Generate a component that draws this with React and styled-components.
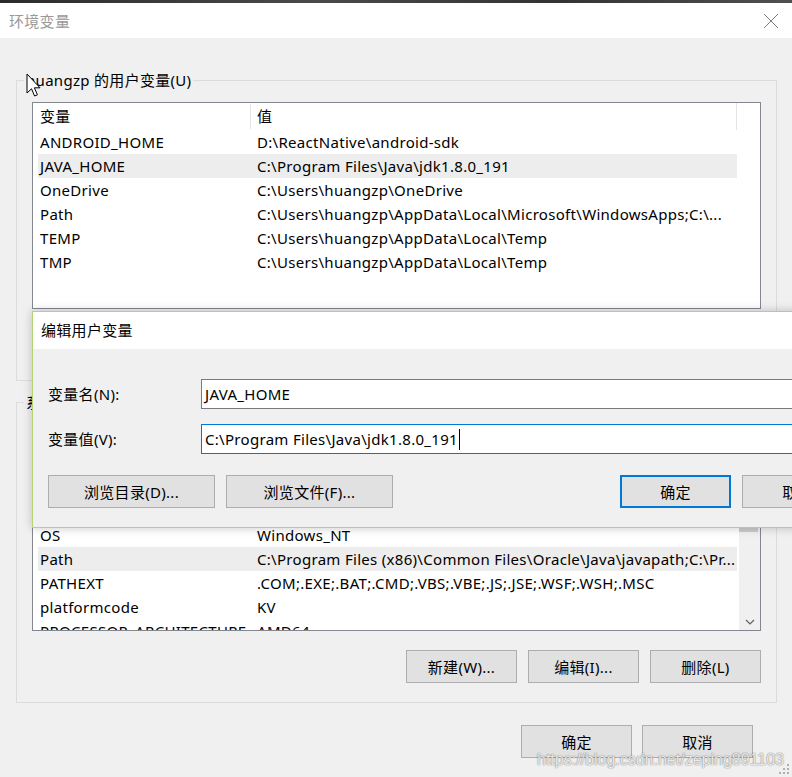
import React from 'react';
import styled, { createGlobalStyle } from 'styled-components';

const userVars = [
    ['ANDROID_HOME', 'D:\\ReactNative\\android-sdk'],
    ['JAVA_HOME', 'C:\\Program Files\\Java\\jdk1.8.0_191', true],
    ['OneDrive', 'C:\\Users\\huangzp\\OneDrive'],
    ['Path', 'C:\\Users\\huangzp\\AppData\\Local\\Microsoft\\WindowsApps;C:\\...'],
    ['TEMP', 'C:\\Users\\huangzp\\AppData\\Local\\Temp'],
    ['TMP', 'C:\\Users\\huangzp\\AppData\\Local\\Temp'],
];

const systemVars = [
    ['ComSpec', 'C:\\WINDOWS\\system32\\cmd.exe'],
    ['DriverData', 'C:\\Windows\\System32\\Drivers\\DriverData'],
    ['NUMBER_OF_PROCESSORS', '4'],
    ['OS', 'Windows_NT'],
    ['Path', 'C:\\Program Files (x86)\\Common Files\\Oracle\\Java\\javapath;C:\\Pr...', true],
    ['PATHEXT', '.COM;.EXE;.BAT;.CMD;.VBS;.VBE;.JS;.JSE;.WSF;.WSH;.MSC'],
    ['platformcode', 'KV'],
    ['PROCESSOR_ARCHITECTURE', 'AMD64'],
];

function VarList({ rows, scroll }) {
    return (
        <ListBox>
            <Columns>
                <HeaderRow>
                    <HeaderCell>变量</HeaderCell>
                    <HeaderCell $second>值</HeaderCell>
                </HeaderRow>
                {rows.map(([name, value, selected], i) =>
                    <Row key={i} $selected={selected}>
                        <Cell>{name}</Cell>
                        <Cell $second>{value}</Cell>
                    </Row>
                )}
            </Columns>
            {scroll && (
                <Scrollbar>
                    <ScrollArrow />
                    <Thumb />
                    <ScrollArrow $bottom>
                        <svg width="10" height="6" viewBox="0 0 10 6">
                            <path d="M1 1 L5 5 L9 1" fill="none" stroke="#606060" strokeWidth="1.2" />
                        </svg>
                    </ScrollArrow>
                </Scrollbar>
            )}
        </ListBox>
    );
}

function App() {
    return (
        <Window>
            <GlobalStyle />
            <TopStrip />
            <TitleBar>
                <Title>环境变量</Title>
                <svg width="16" height="16" viewBox="0 0 16 16">
                    <path d="M1 1 L15 15 M15 1 L1 15" stroke="#7c7c7c" strokeWidth="1" />
                </svg>
            </TitleBar>
            <Body>
                <GroupBox>
                    <Caption>huangzp 的用户变量(U)</Caption>
                    <VarList rows={userVars} />
                    <ButtonRow>
                        <Button>新建(N)...</Button>
                        <Button>编辑(E)...</Button>
                        <Button>删除(D)</Button>
                    </ButtonRow>
                </GroupBox>
                <GroupBox $lower>
                    <Caption>系统变量(S)</Caption>
                    <VarList rows={systemVars} scroll />
                    <ButtonRow>
                        <Button>新建(W)...</Button>
                        <Button>编辑(I)...</Button>
                        <Button>删除(L)</Button>
                    </ButtonRow>
                </GroupBox>
                <Footer>
                    <Button>确定</Button>
                    <Button>取消</Button>
                </Footer>
            </Body>

            <EditDialog>
                <DialogTitle>编辑用户变量</DialogTitle>
                <DialogBody>
                    <FieldGrid>
                        <FieldLabel>变量名(N):</FieldLabel>
                        <TextBox>JAVA_HOME</TextBox>
                        <FieldLabel>变量值(V):</FieldLabel>
                        <TextBox $focused>C:\Program Files\Java\jdk1.8.0_191<Caret /></TextBox>
                    </FieldGrid>
                    <DialogButtons>
                        <Button $width={167}>浏览目录(D)...</Button>
                        <Button $width={167}>浏览文件(F)...</Button>
                        <Spacer />
                        <Button $default>确定</Button>
                        <Button>取消</Button>
                    </DialogButtons>
                </DialogBody>
            </EditDialog>

            <Cursor width="16" height="25" viewBox="0 0 16 25">
                <path d="M1 1 V20 L5.5 15.8 L8.6 23 L11.4 21.8 L8.4 14.8 H14 Z" fill="#fff" stroke="#000" strokeWidth="1" strokeLinejoin="miter" />
            </Cursor>

            <Watermark>https://blog.csdn.net/zeping891103</Watermark>

            <Grip width="12" height="12" viewBox="0 0 12 12">
                <rect x="9" y="1" width="2" height="2" fill="#b0b0b0" />
                <rect x="5" y="5" width="2" height="2" fill="#b0b0b0" />
                <rect x="9" y="5" width="2" height="2" fill="#b0b0b0" />
                <rect x="1" y="9" width="2" height="2" fill="#b0b0b0" />
                <rect x="5" y="9" width="2" height="2" fill="#b0b0b0" />
                <rect x="9" y="9" width="2" height="2" fill="#b0b0b0" />
            </Grip>
        </Window>
    );
}

export default App;

const GlobalStyle = createGlobalStyle`
html, body {
    margin: 0;
    padding: 0;
    background: #f0f0f0;
}
body {
    width: 792px;
    height: 777px;
    overflow: hidden;
    font-family: "Noto Sans", "Noto Sans CJK SC", sans-serif;
    font-size: 15px;
    letter-spacing: 0.3px;
    color: #000;
}
`

const Window = styled.div`
position: relative;
width: 792px;
height: 777px;
overflow: hidden;
background: #f0f0f0;
display: flex;
flex-direction: column;
`

const TopStrip = styled.div`
height: 3px;
background: linear-gradient(90deg, #2b2b2b, #4a4a4a 40%, #333 70%, #505050);
`

const TitleBar = styled.div`
height: 35px;
background: #fff;
display: flex;
align-items: center;
justify-content: space-between;
padding: 0 13px 0 9px;
`

const Title = styled.span`
color: #999;
font-size: 15px;
`

const Body = styled.div`
padding: 42px 15px 0 16px;
display: flex;
flex-direction: column;
`

const GroupBox = styled.div`
border: 1px solid #dcdcdc;
padding: 0 15px 19px;
margin-top: ${props => props.$lower ? '21px' : '0'};
display: flex;
flex-direction: column;
`

const Caption = styled.div`
align-self: flex-start;
margin: -11px 0 0 -8px;
padding: 0 2px;
line-height: 20px;
background: #f0f0f0;
`

const ListBox = styled.div`
margin-top: 12px;
height: 207px;
box-sizing: border-box;
border: 1px solid #838790;
background: #fff;
display: flex;
overflow: hidden;
`

const Columns = styled.div`
width: 699px;
margin-left: 5px;
display: flex;
flex-direction: column;
flex-shrink: 0;
`

const HeaderRow = styled.div`
display: grid;
grid-template-columns: 212px 1fr;
height: 27px;
border-right: 1px solid #e5e5e5;
box-sizing: border-box;
`

const HeaderCell = styled.div`
height: 25px;
margin-top: 1px;
line-height: 25px;
padding-left: ${props => props.$second ? '6px' : '2px'};
border-left: ${props => props.$second ? '1px solid #e5e5e5' : 'none'};
`

const Row = styled.div`
display: grid;
grid-template-columns: 212px 1fr;
height: 24px;
line-height: 24px;
background: ${props => props.$selected ? '#ededed' : 'transparent'};
`

const Cell = styled.div`
padding-left: ${props => props.$second ? '7px' : '2px'};
white-space: nowrap;
overflow: hidden;
`

const Scrollbar = styled.div`
margin-left: auto;
width: 21px;
background: #f0f0f0;
display: flex;
flex-direction: column;
`

const ScrollArrow = styled.div`
height: 17px;
margin-top: ${props => props.$bottom ? 'auto' : '0'};
display: flex;
align-items: center;
justify-content: center;
`

const Thumb = styled.div`
height: 90px;
margin: 0 2px 0 0;
background: #cdcdcd;
`

const ButtonRow = styled.div`
margin-top: 19px;
display: flex;
justify-content: flex-end;
gap: 11px;
`

const Button = styled.button`
width: ${props => props.$width || 111}px;
height: 33px;
box-sizing: border-box;
padding: 0;
background: #e1e1e1;
border: ${props => props.$default ? '2px solid #0078d7' : '1px solid #adadad'};
font-family: inherit;
font-size: 15px;
letter-spacing: inherit;
color: #000;
`

const Footer = styled.div`
margin-top: 22px;
padding-right: 24px;
display: flex;
justify-content: flex-end;
gap: 10px;
`

const EditDialog = styled.div`
position: absolute;
left: 32px;
top: 311px;
width: 837px;
box-sizing: border-box;
border: 1px solid #b4d474;
background: #f0f0f0;
box-shadow: 0 0 9px rgba(0, 0, 0, 0.22);
display: flex;
flex-direction: column;
`

const DialogTitle = styled.div`
height: 37px;
line-height: 37px;
padding-left: 8px;
background: #fff;
`

const DialogBody = styled.div`
padding: 30px 15px 19px;
display: flex;
flex-direction: column;
`

const FieldGrid = styled.div`
display: grid;
grid-template-columns: 153px 1fr;
row-gap: 15px;
align-items: center;
`

const FieldLabel = styled.div`
line-height: 20px;
`

const TextBox = styled.div`
height: 30px;
box-sizing: border-box;
border: 1px solid ${props => props.$focused ? '#0078d7' : '#7a7a7a'};
background: #fff;
padding-left: 3px;
line-height: 28px;
white-space: nowrap;
display: flex;
align-items: center;
`

const Caret = styled.span`
display: inline-block;
width: 1px;
height: 21px;
margin-left: 1px;
background: #000;
`

const DialogButtons = styled.div`
margin-top: 21px;
display: flex;
gap: 11px;
`

const Spacer = styled.div`
flex: 1;
`

const Cursor = styled.svg`
position: absolute;
left: 26px;
top: 73px;
`

const Watermark = styled.div`
position: absolute;
right: 8px;
bottom: 8px;
font-family: "Liberation Sans", Arial, sans-serif;
font-size: 16px;
letter-spacing: 0;
color: rgba(255, 255, 255, 0.85);
text-shadow: 0 0 1px rgba(0, 0, 0, 0.5), 0 0 2px rgba(0, 0, 0, 0.25);
`

const Grip = styled.svg`
position: absolute;
right: 2px;
bottom: 2px;
`
